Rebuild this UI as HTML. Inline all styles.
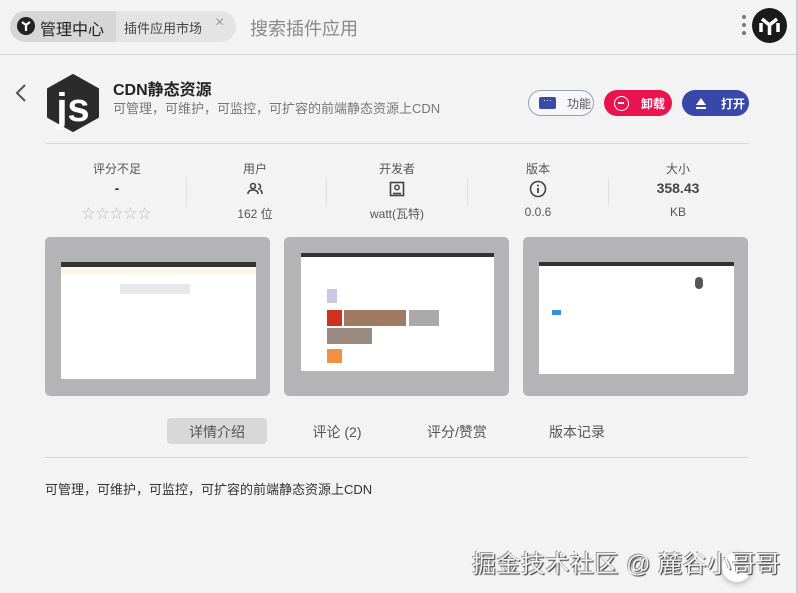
<!DOCTYPE html>
<html><head><meta charset="utf-8"><style>
*{margin:0;padding:0;box-sizing:border-box}
body{width:798px;height:593px;background:#f3f3f3;font-family:"Liberation Sans","Noto Sans CJK SC",sans-serif;position:relative;overflow:hidden;color:#333}
.a{position:absolute}
.c{text-align:center;white-space:nowrap}
.btn{position:absolute;height:26px;border-radius:13px;font-size:12px;display:flex;align-items:center;padding-left:10px}
.card{position:absolute;top:237px;width:225px;height:159px;background:#b4b4b6;border-radius:5px}
.in{position:absolute;background:#fff}
</style></head><body>
<div class="a" style="left:0;top:54px;width:798px;height:1px;background:#d4d4d4"></div>
<div class="a" style="left:10px;top:11px;width:226px;height:31px;border-radius:16px;background:#e4e4e4"></div>
<div class="a" style="left:10px;top:11px;width:106px;height:31px;border-radius:16px 0 0 16px;background:#d6d6d6"></div>
<div class="a" style="left:17px;top:17px;width:18px;height:18px;border-radius:50%;background:#222"></div>
<svg class="a" style="left:17px;top:17px" width="18" height="18" viewBox="0 0 18 18"><path d="M5 5l4 3 4-3M9 8v6" stroke="#fff" stroke-width="2.2" fill="none"/></svg>
<div class="a" style="left:40px;top:16px;font-size:16px;color:#222">管理中心</div>
<div class="a" style="left:124px;top:18px;font-size:13px;color:#444">插件应用市场</div>
<div class="a" style="left:215px;top:14px;font-size:16px;color:#999">×</div>
<div class="a" style="left:250px;top:15px;font-size:18px;color:#888">搜索插件应用</div>
<div class="a" style="left:742px;top:15px;width:4px;height:4px;border-radius:2px;background:#777"></div>
<div class="a" style="left:742px;top:23px;width:4px;height:4px;border-radius:2px;background:#777"></div>
<div class="a" style="left:742px;top:31px;width:4px;height:4px;border-radius:2px;background:#777"></div>
<div class="a" style="left:752px;top:8px;width:35px;height:35px;border-radius:50%;background:#1a1a1a"></div>
<svg class="a" style="left:752px;top:8px" width="35" height="35" viewBox="0 0 35 35"><path d="M10 11l7.5 6 7.5-6M17.5 17v10M9 15v9M26 15v9" stroke="#fff" stroke-width="3.5" fill="none"/></svg>

<svg class="a" style="left:14px;top:83px" width="14" height="20"><path d="M11 2L3 10l8 8" stroke="#555" stroke-width="2" fill="none"/></svg>
<svg class="a" style="left:45px;top:74px" width="56" height="58" viewBox="0 0 56 58"><path d="M28 1L53 15v28L28 57 3 43V15z" fill="#2b2b2b" stroke="#2b2b2b" stroke-width="2" stroke-linejoin="round"/><text x="28" y="47" font-family="Liberation Sans" font-weight="bold" font-size="40" fill="#fff" text-anchor="middle">js</text></svg>
<div class="a" style="left:113px;top:76px;font-size:16px;font-weight:bold;color:#222">CDN静态资源</div>
<div class="a" style="left:113px;top:98px;font-size:13px;color:#777">可管理，可维护，可监控，可扩容的前端静态资源上CDN</div>

<div class="btn" style="left:528px;top:90px;width:66px;border:1px solid #9a9fc0;background:#f7f7f9;color:#555"><span style="display:inline-block;width:17px;height:12px;background:#3a4aa8;border-radius:2px;margin-right:11px;color:#fff;font-size:9px;line-height:6px;text-align:center">···</span>功能</div>
<div class="btn" style="left:604px;top:90px;width:68px;background:#e8134f;color:#fff;font-weight:bold"><span style="display:inline-block;width:15px;height:15px;border:1.5px solid #fff;border-radius:50%;margin-right:12px;position:relative"><span style="position:absolute;left:3px;top:5.5px;width:6px;height:1.5px;background:#fff"></span></span>卸载</div>
<div class="btn" style="left:682px;top:90px;width:67px;background:#3847a8;color:#fff;font-weight:bold;padding-left:13px"><svg width="12" height="12" style="margin-right:14px"><path d="M6 1l5 7H1z M1 10h10v2H1z" fill="#fff"/></svg>打开</div>

<div class="a" style="left:45px;top:143px;width:704px;height:1px;background:#d8d8d8"></div>
<div class="a" style="left:186px;top:178px;width:1px;height:28px;background:#ddd"></div>
<div class="a" style="left:326px;top:178px;width:1px;height:28px;background:#ddd"></div>
<div class="a" style="left:467px;top:178px;width:1px;height:28px;background:#ddd"></div>
<div class="a" style="left:608px;top:178px;width:1px;height:28px;background:#ddd"></div>

<div class="a c" style="left:57px;width:120px;top:160px;font-size:12px;color:#555">评分不足</div>
<div class="a c" style="left:57px;width:120px;top:180px;font-size:14px;font-weight:bold">-</div>
<div class="a c" style="left:57px;width:120px;top:203px;font-size:13px;color:#bbb;letter-spacing:1px">☆☆☆☆☆</div>

<div class="a c" style="left:195px;width:120px;top:160px;font-size:12px;color:#555">用户</div>
<svg class="a" style="left:247px;top:182px" width="16" height="14"><circle cx="6" cy="4" r="2.5" fill="none" stroke="#444" stroke-width="1.6"/><path d="M1 12c0-3 2-4 5-4s5 1 5 4M11 2a2.5 2.5 0 010 5M13 8c2 1 2 2 2 4" fill="none" stroke="#444" stroke-width="1.6"/></svg>
<div class="a c" style="left:195px;width:120px;top:205px;font-size:12px;color:#555">162 位</div>

<div class="a c" style="left:337px;width:120px;top:160px;font-size:12px;color:#555">开发者</div>
<svg class="a" style="left:389px;top:181px" width="16" height="16"><rect x="1.5" y="1.5" width="13" height="13" fill="none" stroke="#444" stroke-width="1.6"/><circle cx="8" cy="6.5" r="2.2" fill="none" stroke="#444" stroke-width="1.5"/><path d="M4 12.5h8" stroke="#444" stroke-width="1.6"/></svg>
<div class="a c" style="left:337px;width:120px;top:205px;font-size:12px;color:#555">watt(瓦特)</div>

<div class="a c" style="left:478px;width:120px;top:160px;font-size:12px;color:#555">版本</div>
<svg class="a" style="left:529px;top:180px" width="18" height="18"><circle cx="9" cy="9" r="7.5" fill="none" stroke="#444" stroke-width="1.6"/><path d="M9 8v5" stroke="#444" stroke-width="1.8"/><circle cx="9" cy="5.5" r="1" fill="#444"/></svg>
<div class="a c" style="left:478px;width:120px;top:205px;font-size:12px;color:#555">0.0.6</div>

<div class="a c" style="left:618px;width:120px;top:160px;font-size:12px;color:#555">大小</div>
<div class="a c" style="left:618px;width:120px;top:180px;font-size:14px;font-weight:bold;color:#444">358.43</div>
<div class="a c" style="left:618px;width:120px;top:205px;font-size:12px;color:#555">KB</div>

<div class="card" style="left:45px"><div class="in" style="left:16px;top:25px;width:195px;height:117px"></div><div class="in" style="left:16px;top:25px;width:195px;height:5px;background:#333"></div><div class="in" style="left:16px;top:30px;width:195px;height:8px;background:#fbf8e8"></div><div class="in" style="left:75px;top:47px;width:70px;height:10px;background:#e8e8ec"></div></div>
<div class="card" style="left:284px"><div class="in" style="left:17px;top:16px;width:193px;height:118px"></div><div class="in" style="left:17px;top:16px;width:193px;height:4px;background:#333"></div>
<div class="in" style="left:43px;top:52px;width:10px;height:14px;background:#c8c8e0"></div>
<div class="in" style="left:43px;top:73px;width:15px;height:16px;background:#d03020"></div><div class="in" style="left:60px;top:73px;width:62px;height:16px;background:#a07a60"></div><div class="in" style="left:125px;top:73px;width:30px;height:16px;background:#aaa"></div><div class="in" style="left:43px;top:91px;width:45px;height:16px;background:#9a8a80"></div><div class="in" style="left:43px;top:112px;width:15px;height:14px;background:#f09040"></div></div>
<div class="card" style="left:523px"><div class="in" style="left:16px;top:25px;width:195px;height:112px"></div><div class="in" style="left:16px;top:25px;width:195px;height:4px;background:#333"></div><div class="in" style="left:29px;top:73px;width:9px;height:5px;background:#3b8de0"></div><div class="in" style="left:172px;top:40px;width:8px;height:12px;background:#555;border-radius:4px"></div></div>

<div class="a" style="left:167px;top:418px;width:100px;height:26px;border-radius:4px;background:#d8d8d8"></div>
<div class="a c" style="left:167px;width:100px;top:422px;font-size:14px;color:#555">详情介绍</div>
<div class="a c" style="left:287px;width:100px;top:422px;font-size:14px;color:#555">评论 (2)</div>
<div class="a c" style="left:407px;width:100px;top:422px;font-size:14px;color:#555">评分/赞赏</div>
<div class="a c" style="left:527px;width:100px;top:422px;font-size:14px;color:#555">版本记录</div>
<div class="a" style="left:45px;top:457px;width:704px;height:1px;background:#d4d4d4"></div>
<div class="a" style="left:45px;top:479px;font-size:13px;color:#333">可管理，可维护，可监控，可扩容的前端静态资源上CDN</div>

<div class="a" style="left:722px;top:552px;width:30px;height:30px;border-radius:50%;background:#fff;box-shadow:0 2px 6px rgba(0,0,0,.25)"></div>
<div class="a" style="left:472px;top:544px;font-size:24px;letter-spacing:0.5px;color:#f4f4f4;text-shadow:1px 1px 1px #333,-1px -1px 0 #999;white-space:nowrap">掘金技术社区 @ 麓谷小哥哥</div>
<div class="a" style="left:796px;top:0;width:2px;height:593px;background:#ccc"></div>
</body></html>
